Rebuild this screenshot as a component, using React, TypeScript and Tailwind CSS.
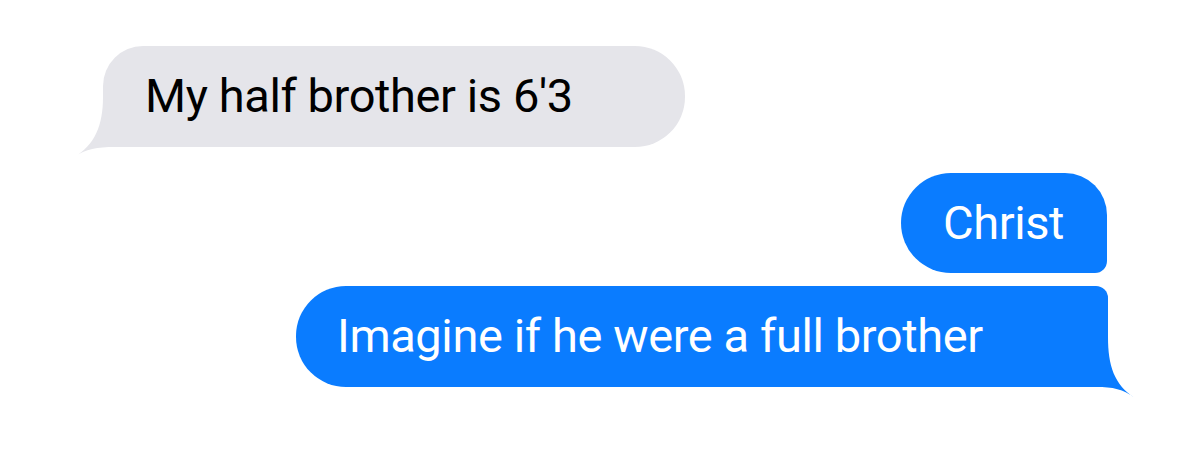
import React from 'react';

const GRAY = 'bg-[#e5e5ea]';
const BLUE = 'bg-[#0a7cff]';

// Little curved tail drawn under a bubble's bottom corner
const Tail = ({ side, color }: { side: 'left' | 'right'; color: string }) =>
  side === 'left' ? (
    <svg
      className="absolute -left-[30px] -bottom-[12px]"
      width={50}
      height={72}
      viewBox="-30 -60 50 72"
    >
      <path d="M0 -50 C0 -22 -8 -2 -29 10 C-17 2 -6 0 12 0 L12 -50 Z" fill={color} />
    </svg>
  ) : (
    <svg
      className="absolute -right-[30px] -bottom-[12px]"
      width={50}
      height={72}
      viewBox="-20 -60 50 72"
    >
      <path d="M0 -50 C0 -22 6 -2 27 11 C15 2 5 0 -12 0 L-12 -50 Z" fill={color} />
    </svg>
  );

const App: React.FC = () => {
  return (
    <div
      className="w-[1200px] h-[461px] bg-white flex flex-col overflow-hidden"
      style={{ fontFamily: 'Roboto, "Noto Sans", sans-serif' }}
    >
      {/* Incoming */}
      <div
        className={`relative ml-[103px] mt-[46px] w-[582px] h-[101px] ${GRAY} rounded-[50px] rounded-tl-[40px] rounded-bl-none flex items-center pl-[42px] text-[47px] tracking-[-0.4px] text-black`}
      >
        <Tail side="left" color="#e5e5ea" />
        <span className="relative">My half brother is 6'3</span>
      </div>

      {/* Outgoing */}
      <div
        className={`relative self-end mr-[93px] mt-[26px] w-[206px] h-[100px] ${BLUE} rounded-l-[50px] rounded-tr-[42px] rounded-br-[12px] flex items-center pl-[42px] text-[47px] tracking-[-0.4px] text-white`}
      >
        Christ
      </div>
      <div
        className={`relative self-end mr-[92px] mt-[13px] w-[812px] h-[101px] ${BLUE} rounded-l-[50px] rounded-tr-[12px] rounded-br-none flex items-center pl-[41px] text-[47px] tracking-[-0.4px] text-white`}
      >
        <Tail side="right" color="#0a7cff" />
        <span className="relative">Imagine if he were a full brother</span>
      </div>
    </div>
  );
};

export default App;
